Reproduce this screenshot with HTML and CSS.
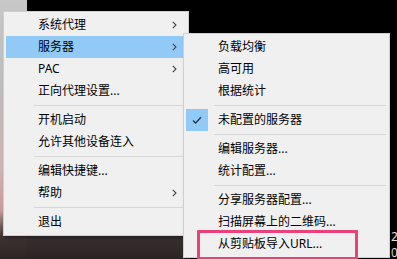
FILE: index.html
```html
<!DOCTYPE html>
<html lang="zh-CN">
<head>
<meta charset="utf-8">
<link rel="stylesheet" href="styles.css">
</head>
<body>
<div class="desk">
  <div class="clock"><span>2:</span><span>0/</span></div>

  <div class="menu main">
    <div class="item"><span class="label">系统代理</span><span class="arrow"><svg width="5" height="8" viewBox="0 0 5 8"><path d="M0.8 0.8 L4 4 L0.8 7.2" fill="none" stroke="#444" stroke-width="1.1"/></svg></span></div>
    <div class="item hl"><span class="label">服务器</span><span class="arrow"><svg width="5" height="8" viewBox="0 0 5 8"><path d="M0.8 0.8 L4 4 L0.8 7.2" fill="none" stroke="#444" stroke-width="1.1"/></svg></span></div>
    <div class="item"><span class="label">PAC</span><span class="arrow"><svg width="5" height="8" viewBox="0 0 5 8"><path d="M0.8 0.8 L4 4 L0.8 7.2" fill="none" stroke="#444" stroke-width="1.1"/></svg></span></div>
    <div class="item"><span class="label">正向代理设置...</span></div>
    <div class="sep"></div>
    <div class="item"><span class="label">开机启动</span></div>
    <div class="item"><span class="label">允许其他设备连入</span></div>
    <div class="sep"></div>
    <div class="item"><span class="label">编辑快捷键...</span></div>
    <div class="item"><span class="label">帮助</span><span class="arrow"><svg width="5" height="8" viewBox="0 0 5 8"><path d="M0.8 0.8 L4 4 L0.8 7.2" fill="none" stroke="#444" stroke-width="1.1"/></svg></span></div>
    <div class="sep"></div>
    <div class="item"><span class="label">退出</span></div>
  </div>

  <div class="menu sub">
    <div class="item"><span class="label">负载均衡</span></div>
    <div class="item"><span class="label">高可用</span></div>
    <div class="item"><span class="label">根据统计</span></div>
    <div class="sep"></div>
    <div class="item"><span class="check"><svg width="22" height="22" viewBox="0 0 22 22"><path d="M7 11.5 L9.6 14 L15 8.3" fill="none" stroke="#2b3440" stroke-width="1.3"/></svg></span><span class="label">未配置的服务器</span></div>
    <div class="sep"></div>
    <div class="item"><span class="label">编辑服务器...</span></div>
    <div class="item"><span class="label">统计配置...</span></div>
    <div class="sep"></div>
    <div class="item"><span class="label">分享服务器配置...</span></div>
    <div class="item"><span class="label">扫描屏幕上的二维码...</span></div>
    <div class="item"><span class="label">从剪贴板导入URL...</span></div>
  </div>

  <div class="mark"></div>
</div>
</body>
</html>
```

FILE: styles.css
```css
html, body {
  margin: 0;
  padding: 0;
}
body {
  width: 397px;
  height: 259px;
  overflow: hidden;
  background: #000;
  font-family: "Noto Sans", "Noto Sans CJK SC", sans-serif;
  font-size: 12px;
  color: #000;
}
.desk {
  position: relative;
  width: 397px;
  height: 259px;
  background-image:
    linear-gradient(to bottom, #c8c8c8 0px, #bcbcbc 90px, #d2b2b2 170px, #c99c9c 210px, #3e3333 236px, #2c2525 259px),
    linear-gradient(to bottom, #3a3131, #2a2323);
  background-size: 27px 259px, 190px 24px;
  background-position: 0 0, 0 235px;
  background-repeat: no-repeat;
}
.clock {
  position: absolute;
  left: 391px;
  top: 229px;
  display: flex;
  flex-direction: column;
  color: #e8e8e8;
  font-size: 12px;
  line-height: 16px;
}
.menu {
  position: absolute;
  background: #f0f0f0;
  border: 1px solid #cfcfcf;
  padding: 2px 0;
  box-shadow: 2px 2px 3px rgba(0, 0, 0, 0.35);
  display: flex;
  flex-direction: column;
}
.main {
  left: 3px;
  top: 11px;
  width: 184px;
}
.sub {
  left: 183px;
  top: 33px;
  width: 205px;
}
.item {
  height: 22px;
  margin: 0 2px;
  display: flex;
  align-items: center;
  position: relative;
}
.main .item { padding-left: 32px; }
.sub .item { padding-left: 32px; }
.item.hl { background: #91c9f7; }
.label {
  flex: 1;
  white-space: nowrap;
  line-height: 22px;
}
.arrow {
  width: 14px;
  display: flex;
  align-items: center;
}
.check {
  position: absolute;
  left: 0;
  top: 0;
  width: 22px;
  height: 22px;
  background: #91c9f7;
  display: flex;
}
.sep {
  height: 7px;
  display: flex;
  align-items: center;
}
.sep::after {
  content: "";
  display: block;
  height: 1px;
  background: #d7d7d7;
  flex: 1;
}
.main .sep { margin: 0 3px 0 30px; }
.sub .sep { margin: 0 3px 0 30px; }
.mark {
  position: absolute;
  left: 197px;
  top: 230px;
  width: 155px;
  height: 24px;
  border: 3px solid #e8417c;
  border-radius: 1px;
}
```
